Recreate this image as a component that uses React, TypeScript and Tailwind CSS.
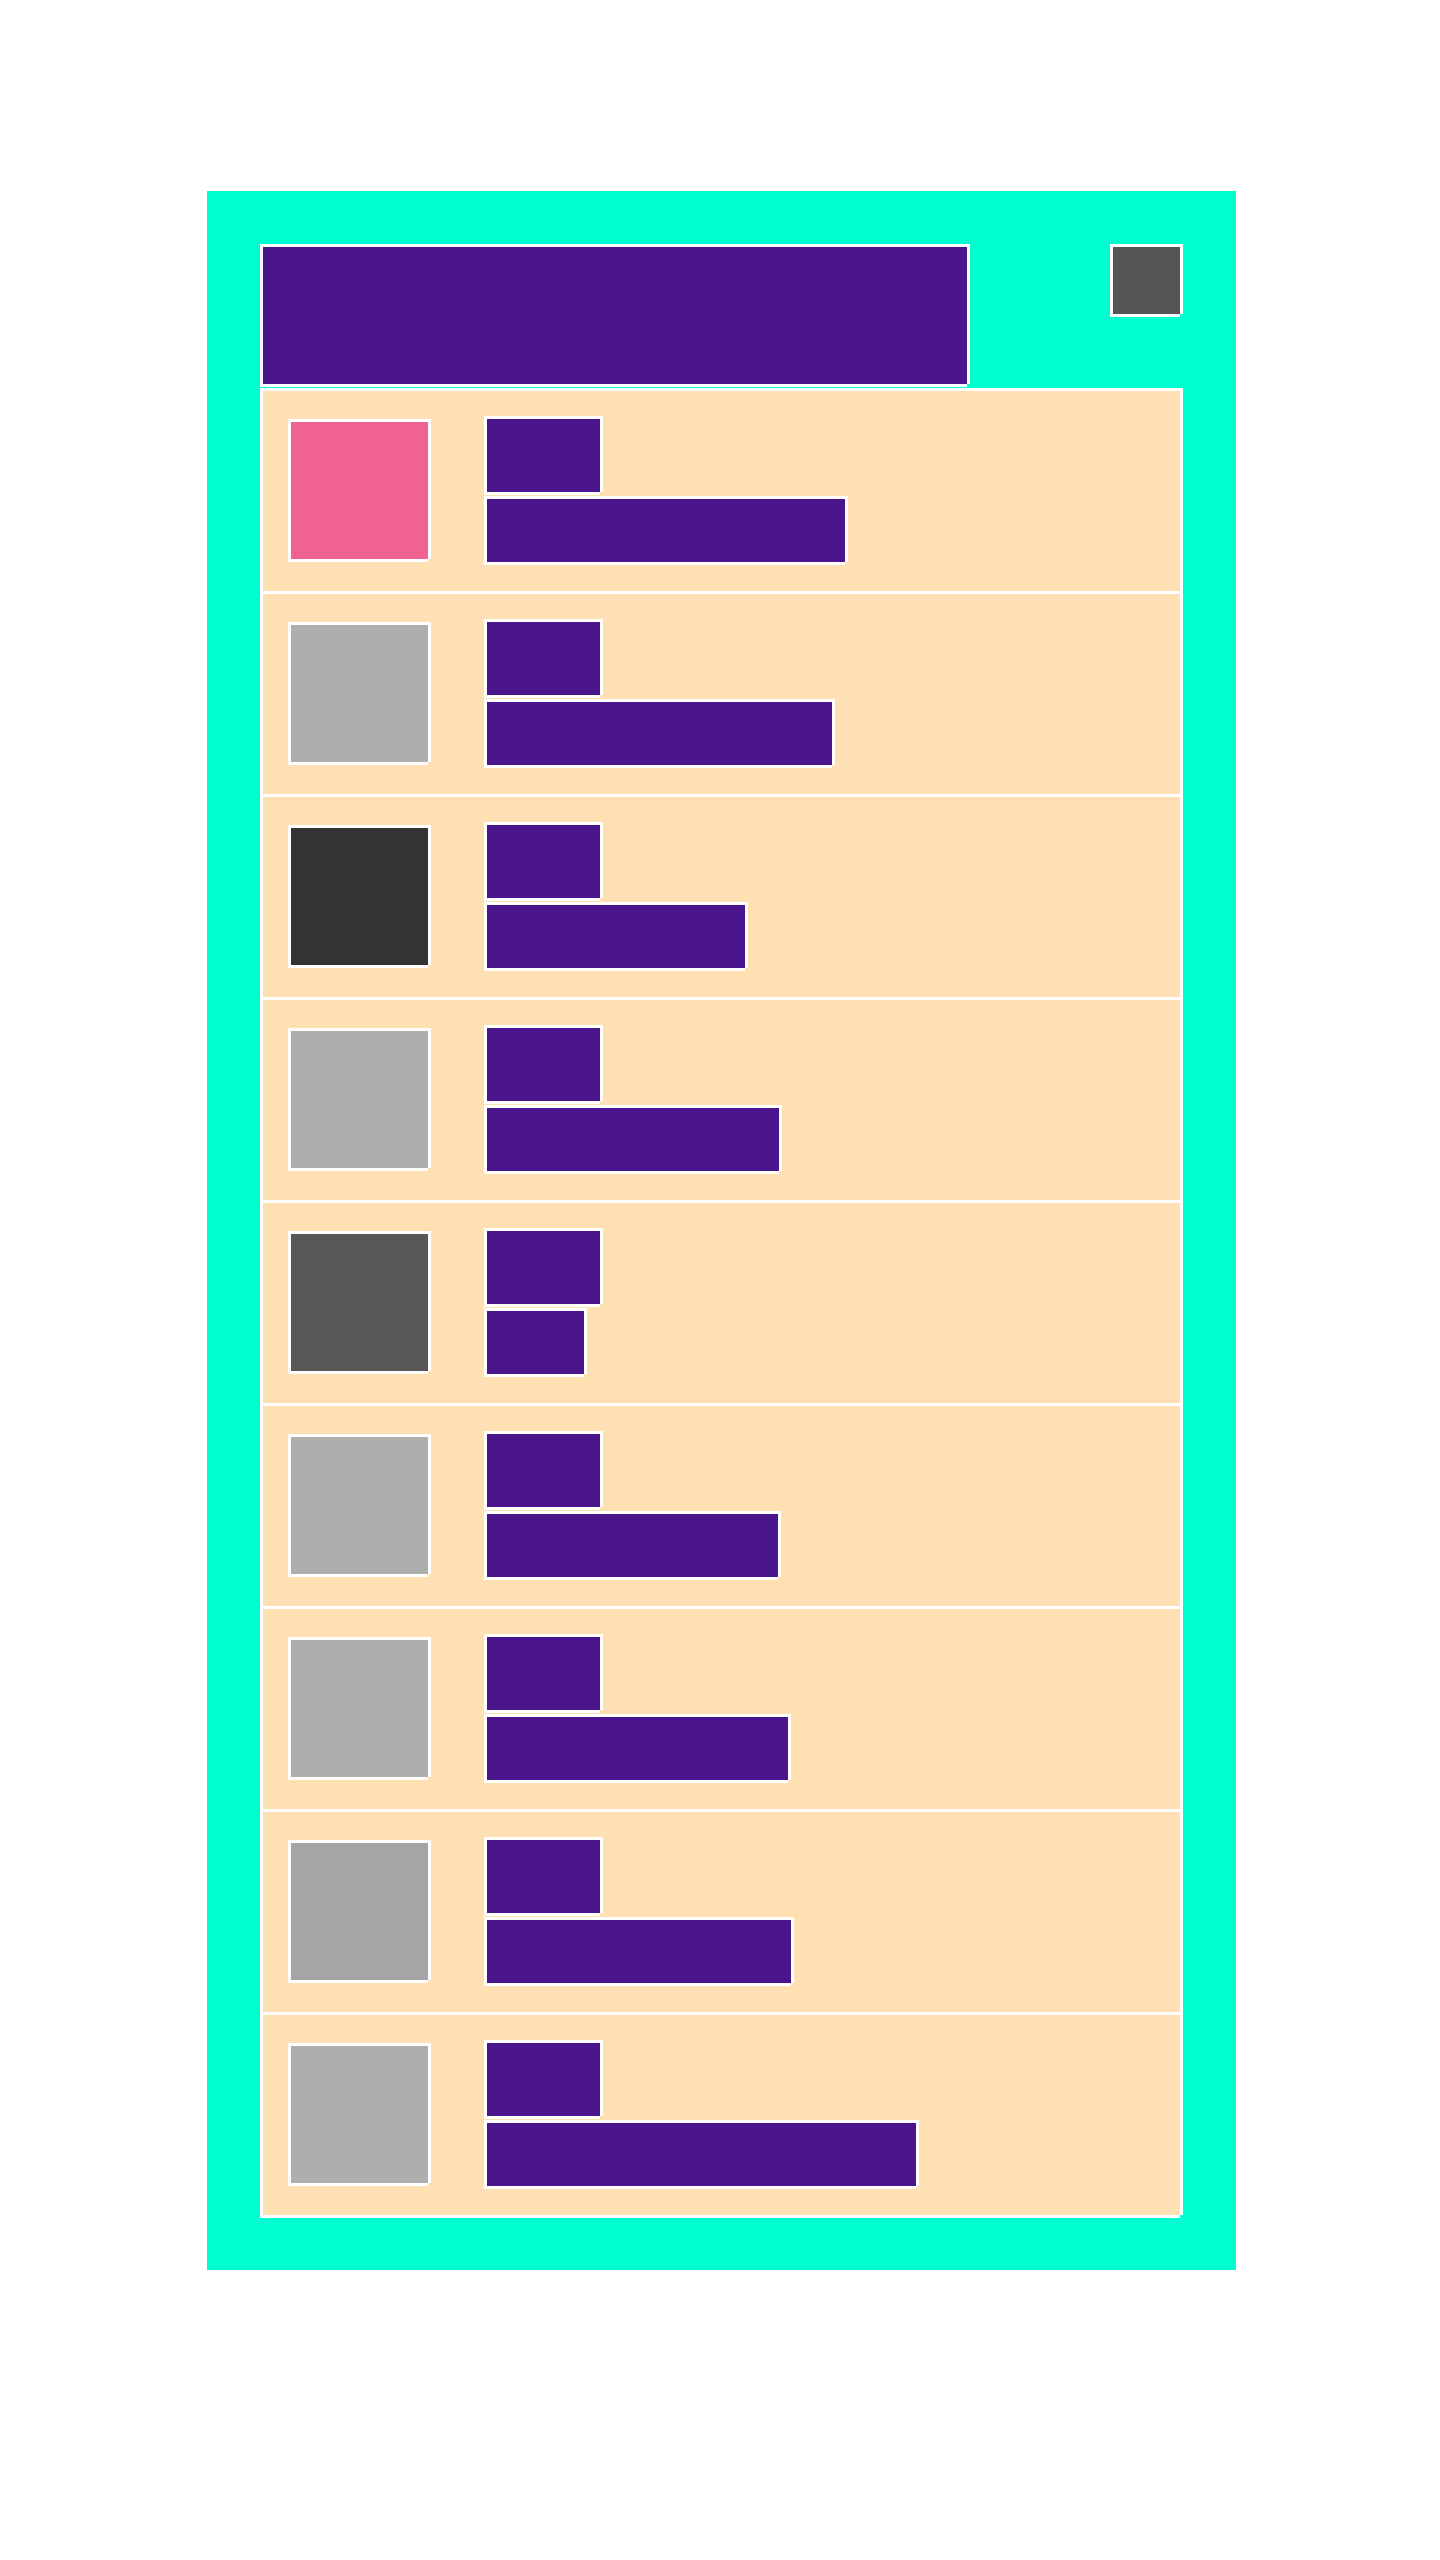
const EDGE =
  "border-l-[3px] border-t-[3px] border-white shadow-[3px_0_0_#ffffff,0_3px_0_#ffffff]";

const ROWS = [
  { thumb: "bg-[#f06292]", bar: 361 },
  { thumb: "bg-[#aeaeae]", bar: 348 },
  { thumb: "bg-[#333333]", bar: 261 },
  { thumb: "bg-[#aeaeae]", bar: 295 },
  { thumb: "bg-[#575757]", bar: 100 },
  { thumb: "bg-[#aeaeae]", bar: 294 },
  { thumb: "bg-[#aeaeae]", bar: 304 },
  { thumb: "bg-[#a5a5a5]", bar: 307 },
  { thumb: "bg-[#aeaeae]", bar: 432 },
];

const ListRow = ({ thumb, bar }: { thumb: string; bar: number }) => (
  <div className={`flex h-[203px] w-[920px] items-start bg-[#ffe0b2] ${EDGE}`}>
    <div className={`ml-[25px] mt-[28px] h-[140px] w-[140px] shrink-0 ${thumb} ${EDGE}`} />
    <div className="ml-[56px] mt-[25px] flex flex-col gap-1">
      <div className={`h-[76px] w-[116px] bg-[#4a148c] ${EDGE}`} />
      {/* description width comes from the data */}
      <div className={`h-[66px] bg-[#4a148c] ${EDGE}`} style={{ width: bar }} />
    </div>
  </div>
);

export default function App() {
  return (
    <div className="min-h-[2560px] bg-white pl-[207px] pt-[191px]">
      <div className="w-[1029px] bg-[#00ffd0] pb-[55px] pl-[53px] pr-[56px] pt-[53px]">
        {/* Header */}
        <div className="mb-1 flex items-start justify-between">
          <div className={`h-[140px] w-[707px] bg-[#4a148c] ${EDGE}`} />
          <div className={`h-[70px] w-[70px] bg-[#555555] ${EDGE}`} />
        </div>

        {/* List */}
        <div className="flex flex-col">
          {ROWS.map((row, i) => (
            <ListRow key={i} thumb={row.thumb} bar={row.bar} />
          ))}
        </div>
      </div>
    </div>
  );
}
